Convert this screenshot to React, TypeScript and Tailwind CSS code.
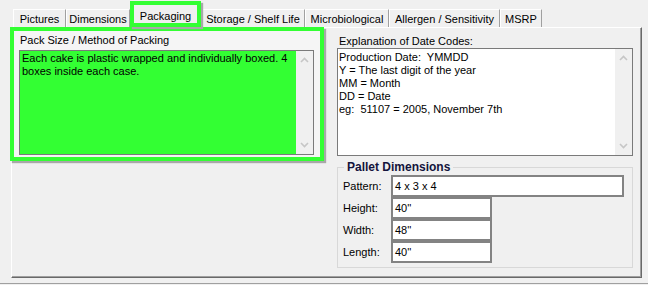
const tabs = [
  { label: "Pictures", w: "w-[53px]" },
  { label: "Dimensions", w: "w-[64px]" },
  { label: "Packaging", w: "w-[71px]", active: true },
  { label: "Storage / Shelf Life", w: "w-[104px]" },
  { label: "Microbiological", w: "w-[84px]" },
  { label: "Allergen / Sensitivity", w: "w-[111px]" },
  { label: "MSRP", w: "w-[42px]" },
];

const dateLines = [
  "Production Date:  YMMDD",
  "Y = The last digit of the year",
  "MM = Month",
  "DD = Date",
  "eg:  51107 = 2005, November 7th",
];

const pallet = [
  { label: "Pattern:", value: "4 x 3 x 4", w: "w-[233px]" },
  { label: "Height:", value: "40''", w: "w-[101px]" },
  { label: "Width:", value: "48''", w: "w-[101px]" },
  { label: "Length:", value: "40''", w: "w-[101px]" },
];

const ScrollBar = () => (
  <div className="w-[17px] shrink-0 flex flex-col justify-between items-center py-[6px] bg-[#f0f0f0]">
    <svg width="9" height="6" viewBox="0 0 9 6">
      <path d="M1 5 L4.5 1.5 L8 5" stroke="#c6c6c6" strokeWidth="1.6" fill="none" />
    </svg>
    <svg width="9" height="6" viewBox="0 0 9 6">
      <path d="M1 1 L4.5 4.5 L8 1" stroke="#c6c6c6" strokeWidth="1.6" fill="none" />
    </svg>
  </div>
);

const App = () => {
  return (
    <div className="w-[648px] h-[285px] bg-[#f0f0f0] text-black font-['Liberation_Sans',Arial,sans-serif] text-[11px] overflow-hidden">
      {/* tab strip */}
      <div className="flex items-end h-[27px] pl-[13px]">
        {tabs.map((t) =>
          t.active ? (
            <div
              key={t.label}
              className={`${t.w} h-[26px] border-4 border-[#33ff33] shadow-[2px_2px_1px_#a8a8a8] flex items-center justify-center pt-[4px] relative z-10`}
            >
              {t.label}
            </div>
          ) : (
            <div
              key={t.label}
              className={`${t.w} h-[18px] border-t border-l border-white border-r border-r-[#a0a0a0] flex items-center justify-center pt-px`}
            >
              {t.label}
            </div>
          )
        )}
      </div>

      {/* tab panel */}
      <div className="ml-[11px] w-[631px] h-[251px] border-l border-t border-white border-r border-b border-r-[#696969] border-b-[#696969] shadow-[inset_-1px_-1px_0_#a0a0a0] flex items-start">
        {/* highlighted pack size group */}
        <div className="-ml-[2px] -mt-[1px] w-[314px] h-[134px] border-4 border-[#33ff33] shadow-[2px_2px_1px_#a8a8a8] bg-[#f5f5f5] pl-[5px] pt-[3px]">
          <div className="leading-[13px] h-[16px] pl-[1px]">Pack Size / Method of Packing</div>
          <div className="w-[295px] h-[105px] border border-[#7a7a7a] bg-[#33ff33] flex">
            <div className="flex-1 px-[2px] pt-[1px] leading-[13px]">
              Each cake is plastic wrapped and individually boxed. 4 boxes inside each case.
            </div>
            <ScrollBar />
          </div>
        </div>

        {/* right column */}
        <div className="ml-[13px] w-[296px] pt-[7px]">
          <div className="leading-[13px] pl-[2px]">Explanation of Date Codes:</div>
          <div className="h-[108px] border border-[#7a7a7a] bg-white flex">
            <div className="flex-1 px-[1px] pt-[2px] leading-[13px]">
              {dateLines.map((l) => (
                <div key={l} className="whitespace-pre">
                  {l}
                </div>
              ))}
            </div>
            <ScrollBar />
          </div>

          <fieldset className="mt-[4px] h-[108px] border border-[#d8d8d8] pl-[5px] pt-[1px]">
            <legend className="ml-[1px] px-[3px] text-[12px] font-bold leading-[14px] text-[#14143c]">
              Pallet Dimensions
            </legend>
            <div className="flex flex-col">
              {pallet.map((p) => (
                <div key={p.label} className="flex items-center h-[22px]">
                  <div className="w-[48px]">{p.label}</div>
                  <div
                    className={`${p.w} h-[22px] border-2 border-[#838383] bg-white flex items-center px-[2px]`}
                  >
                    {p.value}
                  </div>
                </div>
              ))}
            </div>
          </fieldset>
        </div>
      </div>

      <div className="mt-[5px] h-px bg-[#a0a0a0]" />
    </div>
  );
};

export default App;
